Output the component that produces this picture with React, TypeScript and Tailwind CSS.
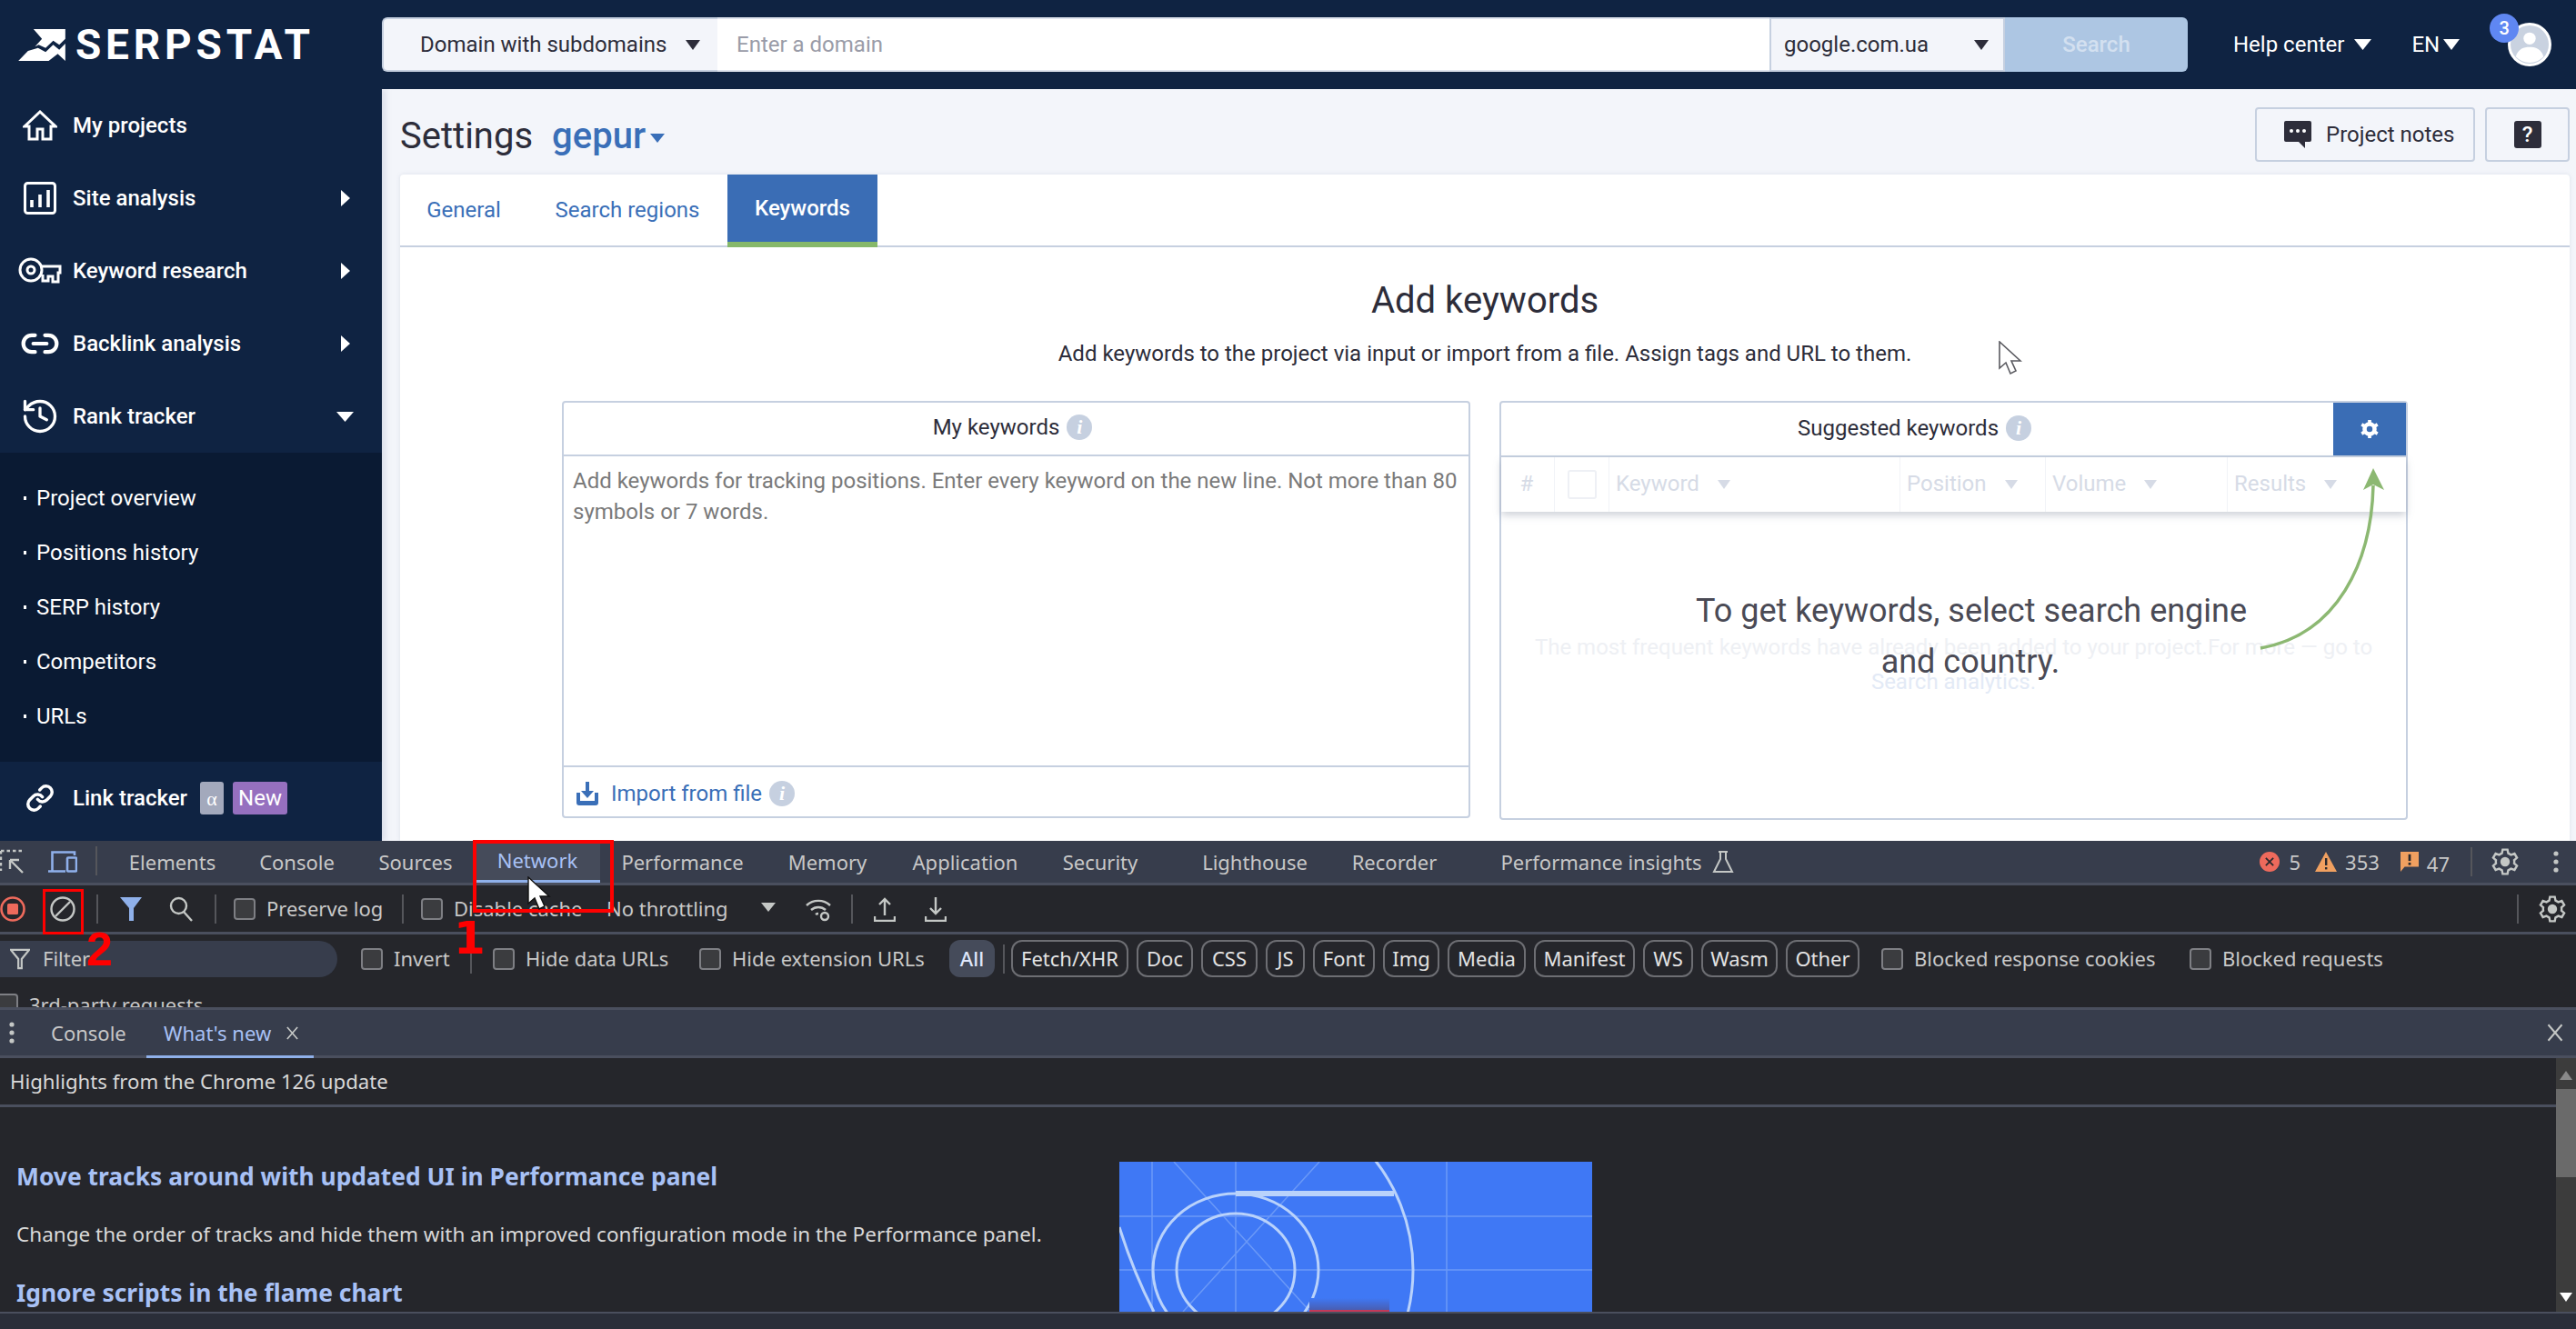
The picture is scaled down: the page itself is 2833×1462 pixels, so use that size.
import React from "react";
import { History, Link, Link2 } from "lucide-react";

const Caret = ({ className }: { className: string }) => (
  <svg viewBox="0 0 18 14" preserveAspectRatio="none" className={className} fill="currentColor"><path d="M0 0H18L9 14Z" /></svg>
);
const RightCaret = () => (
  <svg viewBox="0 0 10 18" className="w-[10px] h-[18px] text-white" fill="currentColor"><path d="M0 0L10 9L0 18Z" /></svg>
);
const Info = () => (
  <span className="w-[28px] h-[28px] rounded-full bg-[#c6d0e0] text-white flex items-center justify-center font-['Liberation_Serif',serif] font-bold italic text-[22px] leading-none shrink-0">i</span>
);

const NavRow = ({ icon, label, arrow }: { icon: React.ReactNode; label: string; arrow?: "right" | "down" }) => (
  <div className="h-[80px] flex items-center relative">
    <div className="w-[88px] flex justify-center shrink-0 pr-[1px]">{icon}</div>
    <span className="-ml-[8px] text-[24px] font-medium text-white">{label}</span>
    {arrow === "right" && <span className="ml-auto mr-[35px]"><RightCaret /></span>}
    {arrow === "down" && <span className="ml-auto mr-[31px]"><Caret className="w-[19px] h-[11px] text-white" /></span>}
  </div>
);

const SubItem = ({ label }: { label: string }) => (
  <div className="h-[60px] flex items-center pl-[26px]">
    <span className="w-[3px] h-[4px] bg-white mr-[11px]" />
    <span className="text-[24px] text-white">{label}</span>
  </div>
);

const Check = ({ label, className }: { label: string; className: string }) => (
  <div className={`flex items-center shrink-0 ${className}`}>
    <span className="w-[24px] h-[24px] rounded-[4px] border-2 border-[#7e7f84] bg-[#3b3c3f] shrink-0" />
    <span className="ml-[12px] text-[22px] text-[#c8c8c8] whitespace-nowrap">{label}</span>
  </div>
);

const Tab = ({ label, className }: { label: string; className: string }) => (
  <div className={`h-full flex items-center justify-center shrink-0 text-[22px] whitespace-nowrap ${className}`}>{label}</div>
);

const Chip = ({ label, className }: { label: string; className: string }) => (
  <div className={`h-[41px] rounded-[12px] border-2 border-[#6d6e73] flex items-center justify-center text-[22px] text-[#e3e3e3] shrink-0 ${className}`}>{label}</div>
);

const Gear = ({ className }: { className: string }) => (
  <svg viewBox="0 0 24 24" className={className} fill="none" stroke="#c4c7c5" strokeWidth="1.8">
    <path d="M10 2h4l.6 3 2.3 1.3 2.9-1 2 3.4-2.3 2a7 7 0 0 1 0 2.6l2.3 2-2 3.4-2.9-1L14.6 19l-.6 3h-4l-.6-3-2.3-1.3-2.9 1-2-3.4 2.3-2a7 7 0 0 1 0-2.6l-2.3-2 2-3.4 2.9 1L9.4 5Z" />
    <circle cx="12" cy="12" r="3" fill="#c4c7c5" />
  </svg>
);

const Dots = ({ className }: { className: string }) => (
  <svg viewBox="0 0 6 24" className={className} fill="#c4c7c5"><circle cx="3" cy="3" r="2.6" /><circle cx="3" cy="12" r="2.6" /><circle cx="3" cy="21" r="2.6" /></svg>
);

const Sep = ({ className }: { className: string }) => <span className={`w-[2px] bg-[#55565b] shrink-0 ${className}`} />;

const HeadCell = ({ label, className }: { label: string; className: string }) => (
  <div className={`h-full flex items-center border-r border-[#f1f3f7] text-[24px] text-[#d6dbe6] shrink-0 pb-[3px] ${className}`}>
    <span>{label}</span>
    <Caret className="w-[14px] h-[10px] ml-[20px] mt-[3px] text-[#d6dbe6]" />
  </div>
);

export default function App() {
  return (
    <div className="relative w-[2833px] h-[1462px] overflow-hidden bg-[#25262b] font-['Roboto',sans-serif]">
      {/* Upper page */}
      <div className="h-[925px] overflow-hidden flex flex-col bg-[#f3f5fa]">
        <header className="relative z-10 h-[98px] shrink-0 bg-[#0f2342] flex items-center">
          <div className="w-[420px] shrink-0 flex items-center pl-[20px]">
            <svg viewBox="30 30 155 105" className="w-[52px] h-[35px]" fill="#fff">
              <path d="M80 30H185V62L165 82L145 68L120 92L97 82L85 88L108 62Z" />
              <path d="M30 135L62 102L95 92L120 106L145 82L165 98L185 78V135L160 112L130 135Z" />
            </svg>
            <span className="ml-[11px] text-white text-[46px] font-bold tracking-[4.8px] leading-none">SERPSTAT</span>
          </div>
          <div className="flex h-[60px] w-[1986px] shrink-0">
            <div className="w-[369px] bg-[#f3f5fa] rounded-l-[6px] border-y-2 border-l-2 border-[#c6d0e0] flex items-center pl-[40px] text-[24px] text-[#2d2d3a]">
              <span>Domain with subdomains</span>
              <Caret className="w-[16px] h-[11px] ml-[21px] text-[#2d2d3a]" />
            </div>
            <div className="w-[1157px] bg-white border-y-2 border-[#dfe4ee] flex items-center pl-[21px] text-[24px] text-[#9a9ca8]">Enter a domain</div>
            <div className="w-[259px] bg-[#f3f5fa] border-2 border-[#c6d0e0] flex items-center pl-[14px] text-[24px] text-[#2d2d3a]">
              <span>google.com.ua</span>
              <Caret className="w-[16px] h-[11px] ml-auto mr-[16px] text-[#2d2d3a]" />
            </div>
            <div className="w-[201px] bg-[#adc6e3] rounded-r-[6px] flex items-center justify-center text-[24px] font-medium text-[#d3e0f0]">Search</div>
          </div>
          <div className="ml-[50px] text-[24px] text-white">Help center</div>
          <Caret className="w-[19px] h-[12px] ml-[11px] text-white" />
          <div className="ml-[44px] text-[24px] text-white">EN</div>
          <Caret className="w-[18px] h-[12px] ml-[4px] text-white" />
          <div className="ml-[53px] relative w-[48px] h-[48px] rounded-full bg-white flex items-center justify-center overflow-visible">
            <svg viewBox="0 0 44 44" className="w-[42px] h-[42px]">
              <circle cx="22" cy="22" r="22" fill="#c9d2e0" />
              <circle cx="22" cy="15" r="7" fill="#fff" />
              <path d="M6 36c3-9 9-11 16-11s13 2 16 11a22 22 0 0 1-32 0Z" fill="#fff" />
            </svg>
            <span className="absolute -left-[20px] -top-[10px] w-[32px] h-[32px] rounded-full bg-[#5f87f2] text-white text-[20px] font-medium flex items-center justify-center">3</span>
          </div>
        </header>

        <div className="flex flex-1 min-h-0">
          <aside className="w-[420px] shrink-0 bg-[#0f2342] flex flex-col shadow-[4px_0_6px_rgba(150,160,190,0.25)]">
            <NavRow label="My projects" icon={
              <svg viewBox="0 0 38 34" className="w-[38px] h-[34px]" fill="none" stroke="#fff" strokeWidth="3"><path d="M2 18L19 2L36 18H31V32H22V21H16V32H7V18Z" /></svg>
            } />
            <NavRow label="Site analysis" arrow="right" icon={
              <svg viewBox="0 0 36 36" className="w-[36px] h-[36px]" fill="none" stroke="#fff" strokeWidth="3"><rect x="1.5" y="1.5" width="33" height="33" rx="3" /><path d="M9 28V20M18 28V14M27 28V9" strokeWidth="3.6" /></svg>
            } />
            <NavRow label="Keyword research" arrow="right" icon={
              <svg viewBox="0 0 48 30" className="w-[48px] h-[30px]" fill="none" stroke="#fff" strokeWidth="3"><circle cx="14" cy="14" r="12" /><circle cx="14" cy="14" r="4" /><path d="M26 10H46V17H44V27H38V21H33V26H27V19" /></svg>
            } />
            <NavRow label="Backlink analysis" arrow="right" icon={<Link2 className="w-[44px] h-[44px] text-white" strokeWidth={2.3} />} />
            <NavRow label="Rank tracker" arrow="down" icon={<History className="w-[44px] h-[44px] text-white" strokeWidth={1.8} />} />
            <div className="bg-[#0a1a33] h-[340px] pt-[20px] shrink-0">
              <SubItem label="Project overview" />
              <SubItem label="Positions history" />
              <SubItem label="SERP history" />
              <SubItem label="Competitors" />
              <SubItem label="URLs" />
            </div>
            <div className="h-[80px] flex items-center shrink-0">
              <div className="w-[88px] flex justify-center"><Link className="w-[32px] h-[32px] text-white" strokeWidth={2.6} /></div>
              <span className="-ml-[8px] text-[24px] font-medium text-white">Link tracker</span>
              <span className="ml-[14px] w-[26px] h-[36px] rounded-[3px] bg-[#a3a9bc] text-white text-[22px] flex items-center justify-center font-['Liberation_Serif',serif]">α</span>
              <span className="ml-[10px] w-[60px] h-[36px] rounded-[3px] bg-[#9670bf] text-white text-[24px] flex items-center justify-center">New</span>
            </div>
          </aside>

          <main className="flex-1 min-w-0 pl-[20px] pr-[7px] flex flex-col">
            <div className="h-[94px] shrink-0 flex items-center pt-[10px]">
              <span className="text-[40px] text-[#2d2d3a] leading-none">Settings</span>
              <span className="ml-[21px] text-[40px] text-[#3a6fb8] font-medium leading-none">gepur</span>
              <Caret className="w-[16px] h-[10px] ml-[5px] mt-[4px] text-[#3a6fb8]" />
              <div className="ml-auto flex gap-[11px] -mt-[5px]">
                <div className="w-[242px] h-[60px] border-2 border-[#c6d0e0] rounded-[4px] flex items-center pl-[30px] text-[24px] text-[#2d2d3a]">
                  <svg viewBox="0 0 30 30" className="w-[30px] h-[30px]"><path d="M2 0H28A2 2 0 0 1 30 2V21A2 2 0 0 1 28 23H23V30L16 23H2A2 2 0 0 1 0 21V2A2 2 0 0 1 2 0Z" fill="#2d2d3a" /><circle cx="8" cy="11" r="2" fill="#fff" /><circle cx="15" cy="11" r="2" fill="#fff" /><circle cx="22" cy="11" r="2" fill="#fff" /></svg>
                  <span className="ml-[16px]">Project notes</span>
                </div>
                <div className="w-[93px] h-[60px] border-2 border-[#c6d0e0] rounded-[4px] flex items-center justify-center">
                  <span className="w-[30px] h-[30px] rounded-[3px] bg-[#2d2d3a] text-white text-[24px] font-medium flex items-center justify-center">?</span>
                </div>
              </div>
            </div>

            <section className="flex-1 min-h-0 bg-white rounded-t-[4px] flex flex-col shadow-[0_0_4px_rgba(170,180,200,0.3)]">
              <div className="h-[80px] shrink-0 border-b-2 border-[#c6d0e0] flex items-stretch text-[24px] text-[#3a6fb8]">
                <div className="w-[360px] flex">
                  <div className="w-[140px] flex items-center justify-center">General</div>
                  <div className="w-[220px] flex items-center justify-center">Search regions</div>
                </div>
                <div className="w-[165px] h-[80px] bg-[#3a6db5] border-b-[6px] border-[#86b86a] text-white font-medium flex items-center justify-center">Keywords</div>
              </div>
              <h1 className="mt-[36px] text-center text-[40px] leading-[46px] text-[#2d2d3a] font-normal">Add keywords</h1>
              <p className="mt-[20px] text-center text-[24px] leading-[30px] text-[#2d2d3a]">Add keywords to the project via input or import from a file. Assign tags and URL to them.</p>
              <div className="mt-[37px] pl-[178px] flex gap-[32px] items-start">
                <div className="w-[999px] h-[459px] border-2 border-[#c6d0e0] rounded-[4px] flex flex-col">
                  <div className="h-[59px] shrink-0 border-b-2 border-[#c6d0e0] flex items-center justify-center gap-[8px] text-[24px] text-[#2d2d3a] pr-[8px] pb-[3px]">
                    <span>My keywords</span><Info />
                  </div>
                  <div className="flex-1 px-[10px] pt-[10px] text-[24px] leading-[34px] text-[#7a7a7a]">Add keywords for tracking positions. Enter every keyword on the new line. Not more than 80 symbols or 7 words.</div>
                  <div className="h-[56px] shrink-0 border-t-2 border-[#c6d0e0] flex items-center pl-[14px] pt-[3px] text-[24px] text-[#3a6fb8]">
                    <svg viewBox="0 0 24 26" className="w-[24px] h-[26px]" fill="#3a6fb8"><path d="M10 0H14V10H19L12 18L5 10H10Z" /><path d="M0 12H4V21H20V12H24V23A3 3 0 0 1 21 26H3A3 3 0 0 1 0 23Z" /></svg>
                    <span className="ml-[14px]">Import from file</span>
                    <span className="ml-[8px]"><Info /></span>
                  </div>
                </div>

                <div className="relative w-[999px] h-[461px] border-2 border-[#c6d0e0] rounded-[4px] flex flex-col">
                  <div className="h-[60px] shrink-0 border-b-2 border-[#c6d0e0] flex">
                    <div className="flex-1 flex items-center justify-center gap-[8px] text-[24px] text-[#2d2d3a] pr-[6px] pb-[3px]"><span>Suggested keywords</span><Info /></div>
                    <div className="w-[80px] bg-[#3a6db5] flex items-center justify-center">
                      <svg viewBox="0 0 24 24" className="w-[22px] h-[22px]" fill="none" stroke="#fff" strokeWidth="5"><circle cx="12" cy="12" r="6" /><path d="M12 1V5M12 19V23M2.5 6.5L6 8.5M18 15.5L21.5 17.5M2.5 17.5L6 15.5M18 8.5L21.5 6.5" strokeWidth="4" /></svg>
                    </div>
                  </div>
                  <div className="h-[60px] shrink-0 flex items-center shadow-[0_4px_8px_rgba(120,130,150,0.35)]">
                    <div className="w-[59px] h-full border-r border-[#f1f3f7] flex items-center justify-center text-[24px] text-[#d6dbe6] pr-[2px] pb-[3px]">#</div>
                    <div className="w-[60px] h-full border-r border-[#f1f3f7] flex items-center justify-center"><span className="w-[32px] h-[32px] rounded-[3px] border-2 border-[#eef0f5]" /></div>
                    <HeadCell label="Keyword" className="w-[320px] pl-[7px]" />
                    <HeadCell label="Position" className="w-[160px] pl-[7px]" />
                    <HeadCell label="Volume" className="w-[200px] pl-[7px]" />
                    <HeadCell label="Results" className="flex-1 border-r-0 pl-[7px]" />
                  </div>
                  <div className="flex-1 text-center text-[24px] leading-[38px] pt-[130px] px-[20px] text-[#eef0f4]">
                    The most frequent keywords have already been added to your project.For more — go to <span className="text-[#e3eaf6]">Search analytics.</span>
                  </div>
                  {/* overlay message */}
                  <div className="absolute left-[214px] top-[201px] w-[604px] text-center text-[36px] leading-[56px] text-[#4a4a55] whitespace-nowrap">To get keywords, select search engine<br />and country.</div>
                  <svg viewBox="0 0 150 215" className="absolute left-[825px] top-[65px] w-[150px] h-[215px]" fill="none">
                    <path d="M10 205C95 190 132 110 134 26" stroke="#8cb872" strokeWidth="3.5" />
                    <path d="M134 7L146 31L134 25L123 31Z" fill="#8cb872" />
                  </svg>
                </div>
              </div>
            </section>
          </main>
        </div>
      </div>

      {/* DevTools */}
      <div className="h-[537px] flex flex-col bg-[#25262b] font-['Noto_Sans',sans-serif]">
        <div className="h-[49px] shrink-0 bg-[#373d4c] border-b-[3px] border-[#4a4f5e] flex items-stretch text-[#c7c7c7]">
          <div className="w-[118px] shrink-0 flex items-center relative">
            <svg viewBox="0 0 28 28" className="w-[28px] h-[28px]" fill="none" stroke="#c4c7c5" strokeWidth="2.4"><path d="M1 2H27M1 2V24" strokeDasharray="3.5 3" /><path d="M11 12L25 26M11 12V22M11 12H21" /></svg>
            <svg viewBox="0 0 32 24" className="w-[32px] h-[24px] ml-[25px]" fill="none" stroke="#8fb0ea" strokeWidth="2.6"><path d="M4.5 22V1.5H29V5M0 22.5H19" /><rect x="21" y="7.5" width="10" height="15" rx="1" /></svg>
            <span className="absolute left-[105px] top-[6px] w-[2px] h-[32px] bg-[#55565b]" />
          </div>
          <Tab label="Elements" className="w-[143px]" />
          <Tab label="Console" className="w-[131px]" />
          <Tab label="Sources" className="w-[130px]" />
          <Tab label="Network" className="w-[138px] bg-[#454b5a] text-[#a8c1f5] border-b-[3px] -mb-[3px] border-[#8fb0ea] h-[49px]" />
          <Tab label="Performance" className="w-[181px]" />
          <Tab label="Memory" className="w-[138px]" />
          <Tab label="Application" className="w-[165px]" />
          <Tab label="Security" className="w-[132px]" />
          <Tab label="Lighthouse" className="w-[208px]" />
          <Tab label="Recorder" className="w-[99px]" />
          <Tab label="Performance insights" className="w-[356px]" />
          <svg viewBox="0 0 24 26" className="w-[24px] h-[26px] -ml-[56px] mt-[10px] shrink-0" fill="none" stroke="#c4c7c5" strokeWidth="2"><path d="M7 2H17M9 2V10L2 24H22L15 10V2" /></svg>
          <div className="ml-auto flex items-center text-[22px] text-[#c7c7c7]">
            <svg viewBox="0 0 24 24" className="w-[22px] h-[22px]"><circle cx="12" cy="12" r="12" fill="#ee6a5c" /><path d="M7.5 7.5L16.5 16.5M16.5 7.5L7.5 16.5" stroke="#2a2a2e" strokeWidth="2" /></svg>
            <span className="ml-[10px]">5</span>
            <svg viewBox="0 0 24 22" className="w-[24px] h-[22px] ml-[16px]"><path d="M12 0L24 22H0Z" fill="#f0a060" /><rect x="11" y="7" width="2.4" height="8" fill="#2a2a2e" /><rect x="11" y="17" width="2.4" height="2.4" fill="#2a2a2e" /></svg>
            <span className="ml-[9px]">353</span>
            <svg viewBox="0 0 22 24" className="w-[20px] h-[22px] ml-[23px]"><path d="M0 0H22V18H5L0 24Z" fill="#f0a060" /><rect x="9.5" y="3" width="3" height="8" fill="#2a2a2e" /><rect x="9.5" y="13" width="3" height="3" fill="#2a2a2e" /></svg>
            <span className="ml-[9px] mt-[4px]">47</span>
            <span className="ml-[23px] w-[2px] h-[32px] bg-[#55565b]" />
            <Gear className="w-[32px] h-[32px] ml-[20px]" />
            <Dots className="w-[6px] h-[24px] ml-[37px] mr-[19px]" />
          </div>
        </div>

        <div className="h-[54px] shrink-0 border-b-[3px] border-[#4a4f5e] flex items-center">
          <svg viewBox="0 0 28 28" className="w-[28px] h-[28px] shrink-0"><circle cx="14" cy="14" r="12.5" fill="none" stroke="#ee6a5c" strokeWidth="2.6" /><rect x="8" y="8" width="12" height="12" rx="1.5" fill="#ee6a5c" /></svg>
          <svg viewBox="0 0 28 28" className="w-[28px] h-[28px] ml-[27px] shrink-0" fill="none" stroke="#c4c7c5" strokeWidth="2.4"><circle cx="14" cy="14" r="12.5" /><path d="M6 22L22 6" /></svg>
          <Sep className="ml-[23px] h-[32px]" />
          <svg viewBox="0 0 24 26" className="w-[24px] h-[26px] ml-[24px] shrink-0" fill="#8fb0ea"><path d="M0 0H24L15 12V26H10V12Z" /></svg>
          <svg viewBox="0 0 26 28" className="w-[26px] h-[28px] ml-[30px] shrink-0" fill="none" stroke="#c4c7c5" strokeWidth="2.4"><circle cx="10.5" cy="10.5" r="8.5" /><path d="M16 17L25 27" /></svg>
          <Sep className="ml-[24px] h-[32px]" />
          <Check label="Preserve log" className="ml-[19px] w-[185px]" />
          <Sep className="h-[32px]" />
          <Check label="Disable cache" className="ml-[19px] w-[204px]" />
          <span className="w-[170px] shrink-0 text-[22px] text-[#c8c8c8]">No throttling</span>
          <Caret className="w-[16px] h-[10px] -mt-[4px] text-[#c4c7c5] shrink-0" />
          <svg viewBox="0 0 30 30" className="w-[30px] h-[30px] ml-[32px] shrink-0" fill="none" stroke="#c4c7c5" strokeWidth="2.4"><path d="M2 11A19 19 0 0 1 28 11M7 16A12 12 0 0 1 23 16M12 21A5 5 0 0 1 15 20" /><circle cx="22" cy="23" r="4" /></svg>
          <Sep className="ml-[21px] h-[32px]" />
          <svg viewBox="0 0 24 28" className="w-[24px] h-[28px] ml-[23px] shrink-0" fill="none" stroke="#c4c7c5" strokeWidth="2.4"><path d="M12 21V3M6 9L12 3L18 9M1 22V27H23V22" /></svg>
          <svg viewBox="0 0 24 28" className="w-[24px] h-[28px] ml-[32px] shrink-0" fill="none" stroke="#c4c7c5" strokeWidth="2.4"><path d="M12 1V19M6 13L12 19L18 13M1 22V27H23V22" /></svg>
          <Sep className="ml-auto h-[32px]" />
          <Gear className="w-[32px] h-[32px] ml-[21px] mr-[10px] shrink-0" />
        </div>

        <div className="h-[80px] shrink-0 overflow-hidden pt-[6px]">
          <div className="flex items-center h-[41px]">
            <div className="w-[371px] h-[40px] rounded-r-[20px] bg-[#373d4c] flex items-center pl-[11px] shrink-0 text-[22px] text-[#c8c8c8]">
              <svg viewBox="0 0 24 26" className="w-[22px] h-[24px] shrink-0" fill="none" stroke="#c4c7c5" strokeWidth="2.4"><path d="M1 2H23L14 13V24H10V13Z" /></svg>
              <span className="ml-[14px]">Filter</span>
            </div>
            <Check label="Invert" className="ml-[26px] w-[120px]" />
            <Sep className="h-[32px]" />
            <Check label="Hide data URLs" className="ml-[23px] w-[227px]" />
            <Check label="Hide extension URLs" className="w-[275px]" />
            <div className="w-[50px] h-[41px] rounded-[12px] bg-[#454b5a] text-[#dfe7fb] font-medium text-[22px] flex items-center justify-center shrink-0">All</div>
            <Sep className="ml-[9px] h-[32px]" />
            <div className="ml-[7px] flex gap-[9px]">
              <Chip label="Fetch/XHR" className="w-[129px]" />
              <Chip label="Doc" className="w-[62px]" />
              <Chip label="CSS" className="w-[62px]" />
              <Chip label="JS" className="w-[43px]" />
              <Chip label="Font" className="w-[68px]" />
              <Chip label="Img" className="w-[62px]" />
              <Chip label="Media" className="w-[86px]" />
              <Chip label="Manifest" className="w-[111px]" />
              <Chip label="WS" className="w-[55px]" />
              <Chip label="Wasm" className="w-[84px]" />
              <Chip label="Other" className="w-[81px]" />
            </div>
            <Check label="Blocked response cookies" className="ml-[24px] w-[339px]" />
            <Check label="Blocked requests" className="" />
          </div>
          <Check label="3rd-party requests" className="-ml-[4px] mt-[18px] h-[24px] w-[300px]" />
        </div>

        <div className="h-[56px] shrink-0 bg-[#373d4c] border-y-[3px] border-[#4a4f5e] flex items-stretch">
          <div className="w-[161px] shrink-0 flex items-center">
            <Dots className="w-[6px] h-[24px] ml-[10px]" />
            <span className="ml-[40px] text-[22px] text-[#c7c7c7]">Console</span>
          </div>
          <div className="w-[184px] h-[53px] border-b-[3px] border-[#8fb0ea] flex items-center pl-[19px] shrink-0">
            <span className="text-[22px] text-[#a8c1f5] whitespace-nowrap">What's new</span>
            <svg viewBox="0 0 16 16" className="w-[15px] h-[15px] ml-[16px] shrink-0" stroke="#c4c7c5" strokeWidth="1.8"><path d="M2 1L14 15M14 1L2 15" /></svg>
          </div>
          <svg viewBox="0 0 16 16" className="w-[20px] h-[20px] ml-auto mr-[13px] self-center" stroke="#c4c7c5" strokeWidth="1.6"><path d="M2 1L14 15M14 1L2 15" /></svg>
        </div>

        <div className="h-[279px] shrink-0 flex">
          <div className="flex-1 min-w-0 flex flex-col">
            <div className="h-[54px] shrink-0 border-b-[3px] border-[#4a4f5e] flex items-center pl-[11px] text-[22.2px] text-[#d8d8d8]">Highlights from the Chrome 126 update</div>
            <div className="flex-1 min-h-0 flex overflow-hidden">
              <div className="w-[1231px] pl-[18px] pt-[58px] shrink-0">
                <h2 className="text-[26.4px] leading-[36px] font-bold text-[#a8c1f5]">Move tracks around with updated UI in Performance panel</h2>
                <p className="mt-[28px] text-[22.5px] leading-[36px] text-[#d8d8d8]">Change the order of tracks and hide them with an improved configuration mode in the Performance panel.</p>
                <h2 className="mt-[28px] text-[26.4px] leading-[36px] font-bold text-[#a8c1f5]">Ignore scripts in the flame chart</h2>
              </div>
              <svg viewBox="0 0 520 165" className="w-[520px] h-[165px] mt-[60px] shrink-0" fill="none">
                <defs>
                  <linearGradient id="shade" x1="0" y1="0" x2="0" y2="1">
                    <stop offset="0" stopColor="#3f78f5" />
                    <stop offset="1" stopColor="#4a5aa8" />
                  </linearGradient>
                </defs>
                <rect width="520" height="165" fill="#3f78f5" />
                <g stroke="#7ea6f8" strokeWidth="1.5" opacity="0.7">
                  <path d="M0 60H520M0 119H520M36 0V165M128 0V165M360 0V165M60 0L210 165M220 0L70 165" />
                </g>
                <g stroke="#b9d2fb" strokeWidth="3">
                  <ellipse cx="128" cy="119" rx="65" ry="62" />
                  <ellipse cx="128" cy="119" rx="91" ry="84" />
                  <circle cx="128" cy="119" r="195" />
                  <path d="M0 72C12 110 25 140 38 165" />
                </g>
                <path d="M128 35H302" stroke="#b9d2fb" strokeWidth="6" />
                <rect x="209" y="150" width="88" height="15" fill="url(#shade)" />
                <rect x="209" y="163" width="88" height="2" fill="#c23a5a" />
              </svg>
            </div>
          </div>
          <div className="w-[22px] shrink-0 bg-[#3c3c3c] flex flex-col items-center">
            <svg viewBox="0 0 14 10" className="w-[14px] h-[10px] mt-[14px]" fill="#8a8a8a"><path d="M7 0L14 10H0Z" /></svg>
            <div className="w-full h-[97px] bg-[#6a6a6a] mt-[10px]" />
            <svg viewBox="0 0 14 10" className="w-[14px] h-[12px] mt-auto mb-[10px]" fill="#fff"><path d="M0 0H14L7 10Z" /></svg>
          </div>
        </div>
        <div className="flex-1 border-t-2 border-[#4a4f5e] bg-[#2a2e39]" />
      </div>

      {/* Overlaid annotations */}
      <svg viewBox="0 0 26 38" className="absolute left-[2198px] top-[375px] w-[26px] h-[38px]" fill="#fff" stroke="#5a5a60" strokeWidth="1.6"><path d="M1 1V30L8 24L13 36L19 33L14 22H24Z" /></svg>
      <div className="absolute left-[520px] top-[924px] w-[155px] h-[80px] border-[4px] border-[#fe0000]" />
      <div className="absolute left-[47px] top-[978px] w-[45px] h-[50px] border-[3px] border-[#fe0000]" />
      <span className="absolute left-[499px] top-[1003px] text-[50px] leading-[58px] font-bold text-[#fe0000] font-['DejaVu_Sans',sans-serif]">1</span>
      <span className="absolute left-[95px] top-[1014px] text-[52px] leading-[60px] font-bold text-[#fe0000] font-['Liberation_Sans',sans-serif]">2</span>
      <svg viewBox="0 0 26 38" className="absolute left-[580px] top-[964px] w-[26px] h-[38px]" fill="#fff" stroke="#111" strokeWidth="1.4"><path d="M1 1V30L8 24L13 36L19 33L14 22H24Z" /></svg>
    </div>
  );
}
